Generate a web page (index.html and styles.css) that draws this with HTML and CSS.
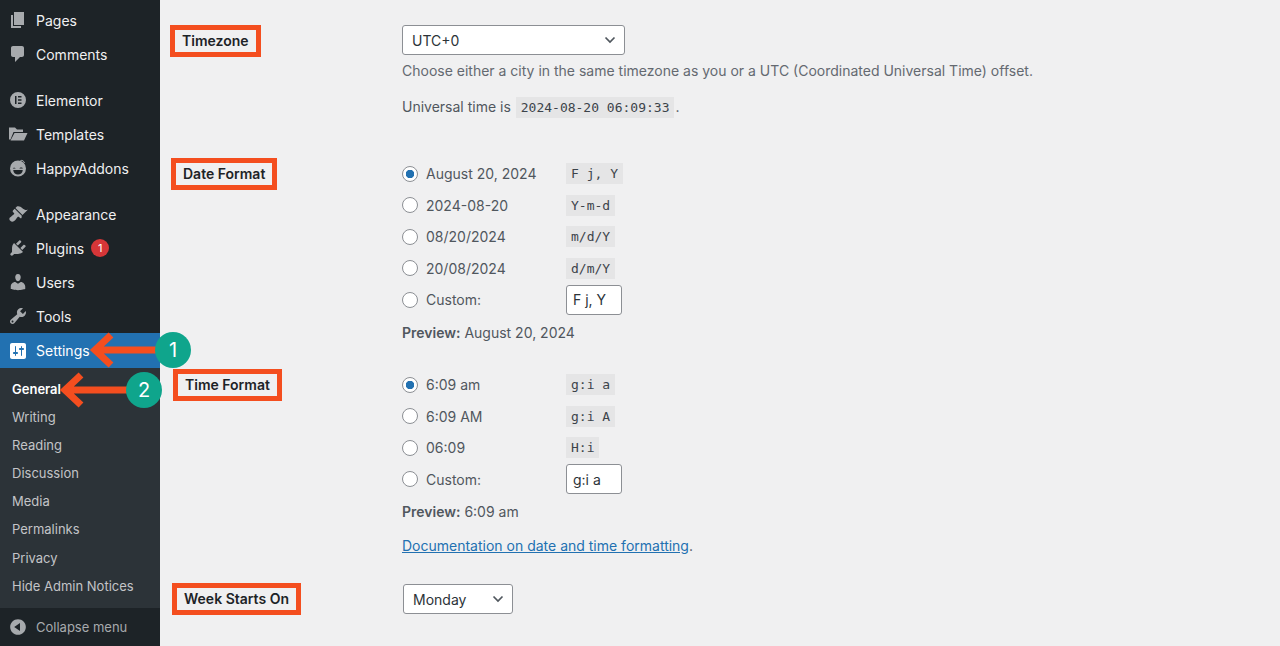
FILE: index.html
```html
<!DOCTYPE html>
<html lang="en">
<head>
    <meta charset="UTF-8">
    <meta name="viewport" content="width=device-width, initial-scale=1.0">
    <title>General Settings</title>
    <link rel="stylesheet" href="styles.css">
</head>
<body>
    <nav class="sidebar">
        <ul class="menu">
            <li class="menu-item"><svg class="icon" viewBox="0 0 20 20"><path d="M6 15V2h10v13H6zm-1 1h8v2H3V5h2v11z"/></svg>Pages</li>
            <li class="menu-item"><svg class="icon" viewBox="0 0 20 20"><path d="M5 2h9c1.1 0 2 .9 2 2v7c0 1.1-.9 2-2 2h-2l-5 5v-5H5c-1.1 0-2-.9-2-2V4c0-1.1.9-2 2-2z"/></svg>Comments</li>
            <li class="menu-item group-start"><svg class="icon" viewBox="0 0 20 20"><path fill-rule="evenodd" d="M10 2a8 8 0 1 1 0 16a8 8 0 0 1 0-16zM7 6v8h1.5V6zM10 6v1.5h3.5V6zM10 9.2v1.6h3.5V9.200zM10 12.500V14h3.500v-1.500z"/></svg>Elementor</li>
            <li class="menu-item"><svg class="icon" viewBox="0 0 20 20"><path d="M1 3.500h6l2 2h6V8H5.500L2.500 15.500H1zM6.500 9H19.500l-3.500 7.500H2.500z"/></svg>Templates</li>
            <li class="menu-item"><svg class="icon" viewBox="0 0 20 20"><path fill-rule="evenodd" d="M10 2.500a8 8 0 1 1 0 16a8 8 0 0 1 0-16zM4.800 10.500c0-1.100 2.800-1.100 2.800 0zM11.500 10.500c0-1.300 3.300-1.300 3.300 0zM5.200 12c.4 6 9.200 6 9.600 0z"/><path d="M12.500 2.500c1.800-.5 3.500.5 4 2.500" fill="none" stroke="#a7aaad" stroke-width="1"/></svg>HappyAddons</li>
            <li class="menu-item group-start"><svg class="icon" viewBox="0 0 20 20"><path d="M14.480 11.060L7.410 3.990l1.500-1.500c.5-.56 2.300-.47 3.510.32 1.210.8 1.430 1.280 2.910 2.100 1.180.64 2.450 1.260 4.450.85zm-.71.71L6.700 4.700 4.930 6.470c-.39.39-.39 1.020 0 1.410l1.060 1.060c.39.39.39 1.030 0 1.420-.6.6-1.430 1.110-2.210 1.690-.35.26-.7.53-1.010.84C1.430 13.230.66 15.080 2.300 16.700c1.640 1.640 3.470.87 4.810-.47.31-.31.58-.66.84-1.010.58-.78 1.090-1.610 1.690-2.210.39-.39 1.030-.39 1.420 0l1.060 1.060c.39.39 1.020.39 1.410 0z"/></svg>Appearance</li>
            <li class="menu-item"><svg class="icon" viewBox="0 0 20 20"><path d="M13.110 4.360L9.870 7.600 8 5.730l3.240-3.240c.35-.34 1.050-.2 1.560.32.52.51.66 1.210.31 1.550zm-8 1.770l.91-1.120 9.010 9.010-1.190.84c-.71.71-2.630 1.160-3.820 1.160H6.140L4.900 17.260c-.59.59-1.540.59-2.120 0-.59-.58-.59-1.530 0-2.120l1.240-1.240v-3.880c0-1.130.4-3.190 1.090-3.890zm7.260 3.970l3.240-3.240c.34-.35 1.040-.21 1.550.31.52.51.66 1.210.31 1.550l-3.240 3.250z"/></svg>Plugins<span class="count">1</span></li>
            <li class="menu-item"><svg class="icon" viewBox="0 0 20 20"><path d="M10 9.250c-2.270 0-2.730-3.440-2.730-3.440C7 4.020 7.820 2 9.970 2c2.160 0 2.980 2.020 2.710 3.810 0 0-.41 3.440-2.680 3.440zm0 2.570L12.720 10c2.390 0 4.520 2.330 4.520 4.530v2.490s-3.650 1.130-7.240 1.130c-3.650 0-7.240-1.130-7.240-1.130v-2.490c0-2.250 1.940-4.480 4.470-4.480z"/></svg>Users</li>
            <li class="menu-item"><svg class="icon" viewBox="0 0 20 20"><path d="M16.680 9.770c-1.340 1.340-3.300 1.670-4.950.99l-5.410 6.520c-.99.99-2.590.99-3.580 0s-.99-2.590 0-3.570l6.520-5.420c-.68-1.650-.35-3.610.99-4.950 1.280-1.280 3.120-1.620 4.720-1.060l-2.890 2.890 2.820 2.820 2.860-2.870c.53 1.580.18 3.390-1.080 4.650zM3.810 16.210c.4.39 1.040.39 1.430 0 .4-.4.4-1.040 0-1.430-.39-.4-1.030-.4-1.430 0-.39.39-.39 1.030 0 1.430z"/></svg>Tools</li>
            <li class="menu-item current"><svg class="icon" viewBox="0 0 20 20"><path d="M18 16V4c0-1.100-.9-2-2-2H4c-1.100 0-2 .9-2 2v12c0 1.100.9 2 2 2h12c1.100 0 2-.9 2-2zM8 11h1c.55 0 1 .45 1 1s-.45 1-1 1H8v1.500c0 .28-.22.5-.5.5s-.5-.22-.5-.5V13H6c-.55 0-1-.45-1-1s.45-1 1-1h1V5.500c0-.28.22-.5.5-.5s.5.22.5.5V11zm5-2h-1c-.55 0-1-.45-1-1s.45-1 1-1h1V5.500c0-.28.22-.5.5-.5s.5.22.5.5V7h1c.55 0 1 .45 1 1s-.45 1-1 1h-1v5.500c0 .28-.22.5-.5.5s-.5-.22-.5-.5V9z"/></svg>Settings</li>
        </ul>
        <ul class="submenu">
            <li class="active">General</li>
            <li>Writing</li>
            <li>Reading</li>
            <li>Discussion</li>
            <li>Media</li>
            <li>Permalinks</li>
            <li>Privacy</li>
            <li>Hide Admin Notices</li>
        </ul>
        <div class="collapse"><svg class="icon" viewBox="0 0 20 20"><path d="M10 2.160c4.330 0 7.840 3.510 7.840 7.840s-3.510 7.840-7.840 7.840S2.160 14.330 2.160 10 5.710 2.160 10 2.160zm2 11.720V6.120L6.180 9.970z"/></svg>Collapse menu</div>
    </nav>

    <main class="content">
        <section class="row row-timezone">
            <div><span class="mark">Timezone</span></div>
            <div>
                <div class="select select-wide">UTC+0<svg class="chevron" viewBox="0 0 12 8"><path d="M1.500 1.500L6 6l4.500-4.500"/></svg></div>
                <p class="description">Choose either a city in the same timezone as you or a UTC (Coordinated Universal Time) offset.</p>
                <p class="universal">Universal time is <code>2024-08-20 06:09:33</code>.</p>
            </div>
        </section>

        <section class="row row-date">
            <div><span class="mark mark-date">Date Format</span></div>
            <div>
                <label class="option"><input type="radio" name="date" checked><span class="option-text">August 20, 2024</span><code>F j, Y</code></label>
                <label class="option"><input type="radio" name="date"><span class="option-text">2024-08-20</span><code>Y-m-d</code></label>
                <label class="option"><input type="radio" name="date"><span class="option-text">08/20/2024</span><code>m/d/Y</code></label>
                <label class="option"><input type="radio" name="date"><span class="option-text">20/08/2024</span><code>d/m/Y</code></label>
                <label class="option"><input type="radio" name="date"><span class="option-text">Custom:</span><input class="custom" type="text" value="F j, Y"></label>
                <p class="preview"><b>Preview:</b> August 20, 2024</p>
            </div>
        </section>

        <section class="row row-time">
            <div><span class="mark mark-time">Time Format</span></div>
            <div>
                <label class="option"><input type="radio" name="time" checked><span class="option-text">6:09 am</span><code>g:i a</code></label>
                <label class="option"><input type="radio" name="time"><span class="option-text">6:09 AM</span><code>g:i A</code></label>
                <label class="option"><input type="radio" name="time"><span class="option-text">06:09</span><code>H:i</code></label>
                <label class="option"><input type="radio" name="time"><span class="option-text">Custom:</span><input class="custom" type="text" value="g:i a"></label>
                <p class="preview"><b>Preview:</b> 6:09 am</p>
                <p class="doc"><a href="#">Documentation on date and time formatting</a>.</p>
            </div>
        </section>

        <section class="row row-week">
            <div><span class="mark mark-week">Week Starts On</span></div>
            <div>
                <div class="select select-small">Monday<svg class="chevron" viewBox="0 0 12 8"><path d="M1.500 1.500L6 6l4.500-4.500"/></svg></div>
            </div>
        </section>
    </main>

    <!-- callouts drawn on top of the screenshot -->
    <svg class="arrow arrow-one" viewBox="0 0 70 40"><path d="M68 20H8M22 5L6 20l16 15" /></svg>
    <span class="step step-one">1</span>
    <svg class="arrow arrow-two" viewBox="0 0 70 40"><path d="M68 20H8M22 5L6 20l16 15" /></svg>
    <span class="step step-two">2</span>
</body>
</html>
```

FILE: styles.css
```css
* {
    box-sizing: border-box;
}
html, body {
    height: 646px;
    overflow: hidden;
}
body {
    margin: 0;
    display: flex;
    background-color: #f0f0f1;
    color: #2c3338;
    font-family: Inter, "Noto Sans", sans-serif;
    font-size: 14px;
}
ul {
    list-style: none;
    margin: 0;
    padding: 0;
}
p {
    margin: 0;
}

/* sidebar */
.sidebar {
    width: 160px;
    flex-shrink: 0;
    height: 646px;
    display: flex;
    flex-direction: column;
    background-color: #1d2327;
    color: #f0f0f1;
}
.menu {
    padding-top: 3px;
}
.menu-item {
    height: 34px;
    display: flex;
    align-items: center;
    padding-left: 8px;
}
.group-start {
    margin-top: 12px;
}
.icon {
    width: 20px;
    height: 20px;
    margin-right: 8px;
    fill: #a7aaad;
    flex-shrink: 0;
}
.count {
    width: 18px;
    height: 18px;
    margin-left: 7px;
    border-radius: 50%;
    background-color: #d63638;
    color: #fff;
    font-size: 11px;
    line-height: 18px;
    text-align: center;
}
.current {
    background-color: #2271b1;
    color: #fff;
    height: 35px;
}
.current .icon {
    fill: #fff;
}
.submenu {
    flex: 1;
    padding-top: 7px;
    background-color: #2c3338;
    color: #c3c4c7;
    font-size: 13px;
}
.submenu li {
    height: 28.100px;
    line-height: 28px;
    padding-left: 12px;
}
.submenu .active {
    color: #fff;
    font-weight: 600;
}
.collapse {
    height: 38px;
    display: flex;
    align-items: center;
    padding-left: 8px;
    font-size: 13px;
    color: #a7aaad;
}

/* settings form */
.content {
    flex: 1;
    padding-left: 10px;
}
.row {
    display: grid;
    grid-template-columns: 232px 1fr;
}
.row-timezone {
    padding-top: 25px;
    height: 158px;
}
.row-date {
    height: 211px;
}
.row-time {
    height: 214px;
}
.mark {
    display: inline-block;
    height: 32px;
    padding: 0 7px;
    border: 5px solid #f44e1f;
    font-weight: 600;
    line-height: 21px;
    color: #1d2327;
}
.mark-date {
    margin-left: 1px;
}
.mark-time {
    margin-left: 3px;
}
.mark-week {
    margin-left: 2px;
}
.select {
    height: 30px;
    display: flex;
    align-items: center;
    justify-content: space-between;
    background-color: #fff;
    border: 1px solid #8c8f94;
    border-radius: 3px;
    padding: 0 8px 0 9px;
    color: #2c3338;
}
.select-wide {
    width: 223px;
}
.select-small {
    width: 110px;
    margin: 1px 0 0 1px;
}
.chevron {
    width: 12px;
    height: 8px;
    fill: none;
    stroke: #50575e;
    stroke-width: 1.700;
}
.description {
    margin-top: 6px;
    line-height: 19px;
    color: #646970;
}
.universal {
    margin-top: 16px;
    line-height: 22px;
    color: #50575e;
}
code {
    font-family: "DejaVu Sans Mono", monospace;
    font-size: 13px;
    background-color: #e5e5e6;
    color: #3c434a;
    padding: 3px 5px;
    margin: 0 1px;
}
.option {
    height: 31.500px;
    display: flex;
    align-items: center;
    color: #50575e;
}
input[type="radio"] {
    appearance: none;
    width: 16px;
    height: 16px;
    margin: 0 8px 0 0;
    border: 1px solid #8c8f94;
    border-radius: 50%;
    background-color: #fff;
    flex-shrink: 0;
}
input[type="radio"]:checked {
    background: radial-gradient(circle, #2271b1 0 4px, #fff 4.500px);
}
.option-text {
    width: 140px;
}
.option code {
    margin: 0;
}
.custom {
    width: 56px;
    height: 30px;
    padding: 0 6px;
    border: 1px solid #8c8f94;
    border-radius: 3px;
    background-color: #fff;
    color: #2c3338;
    font: inherit;
}
.preview {
    margin-top: 7px;
    line-height: 20px;
    color: #50575e;
}
.preview b {
    font-weight: 600;
}
.doc {
    margin-top: 14px;
    line-height: 20px;
    color: #50575e;
}
.doc a {
    color: #2271b1;
}
.row-date > div:last-child {
    padding-top: 0;
}

/* callouts */
.arrow {
    position: absolute;
    width: 70px;
    height: 40px;
    fill: none;
    stroke: #f44e1f;
    stroke-width: 7px;
}
.arrow-one {
    left: 89px;
    top: 330px;
}
.arrow-two {
    left: 59px;
    top: 370px;
}
.step {
    position: absolute;
    width: 36px;
    height: 36px;
    border-radius: 50%;
    background-color: #0fa58c;
    color: #fff;
    font-size: 20px;
    line-height: 36px;
    text-align: center;
}
.step-one {
    left: 155px;
    top: 332px;
}
.step-two {
    left: 126px;
    top: 372px;
}
```
